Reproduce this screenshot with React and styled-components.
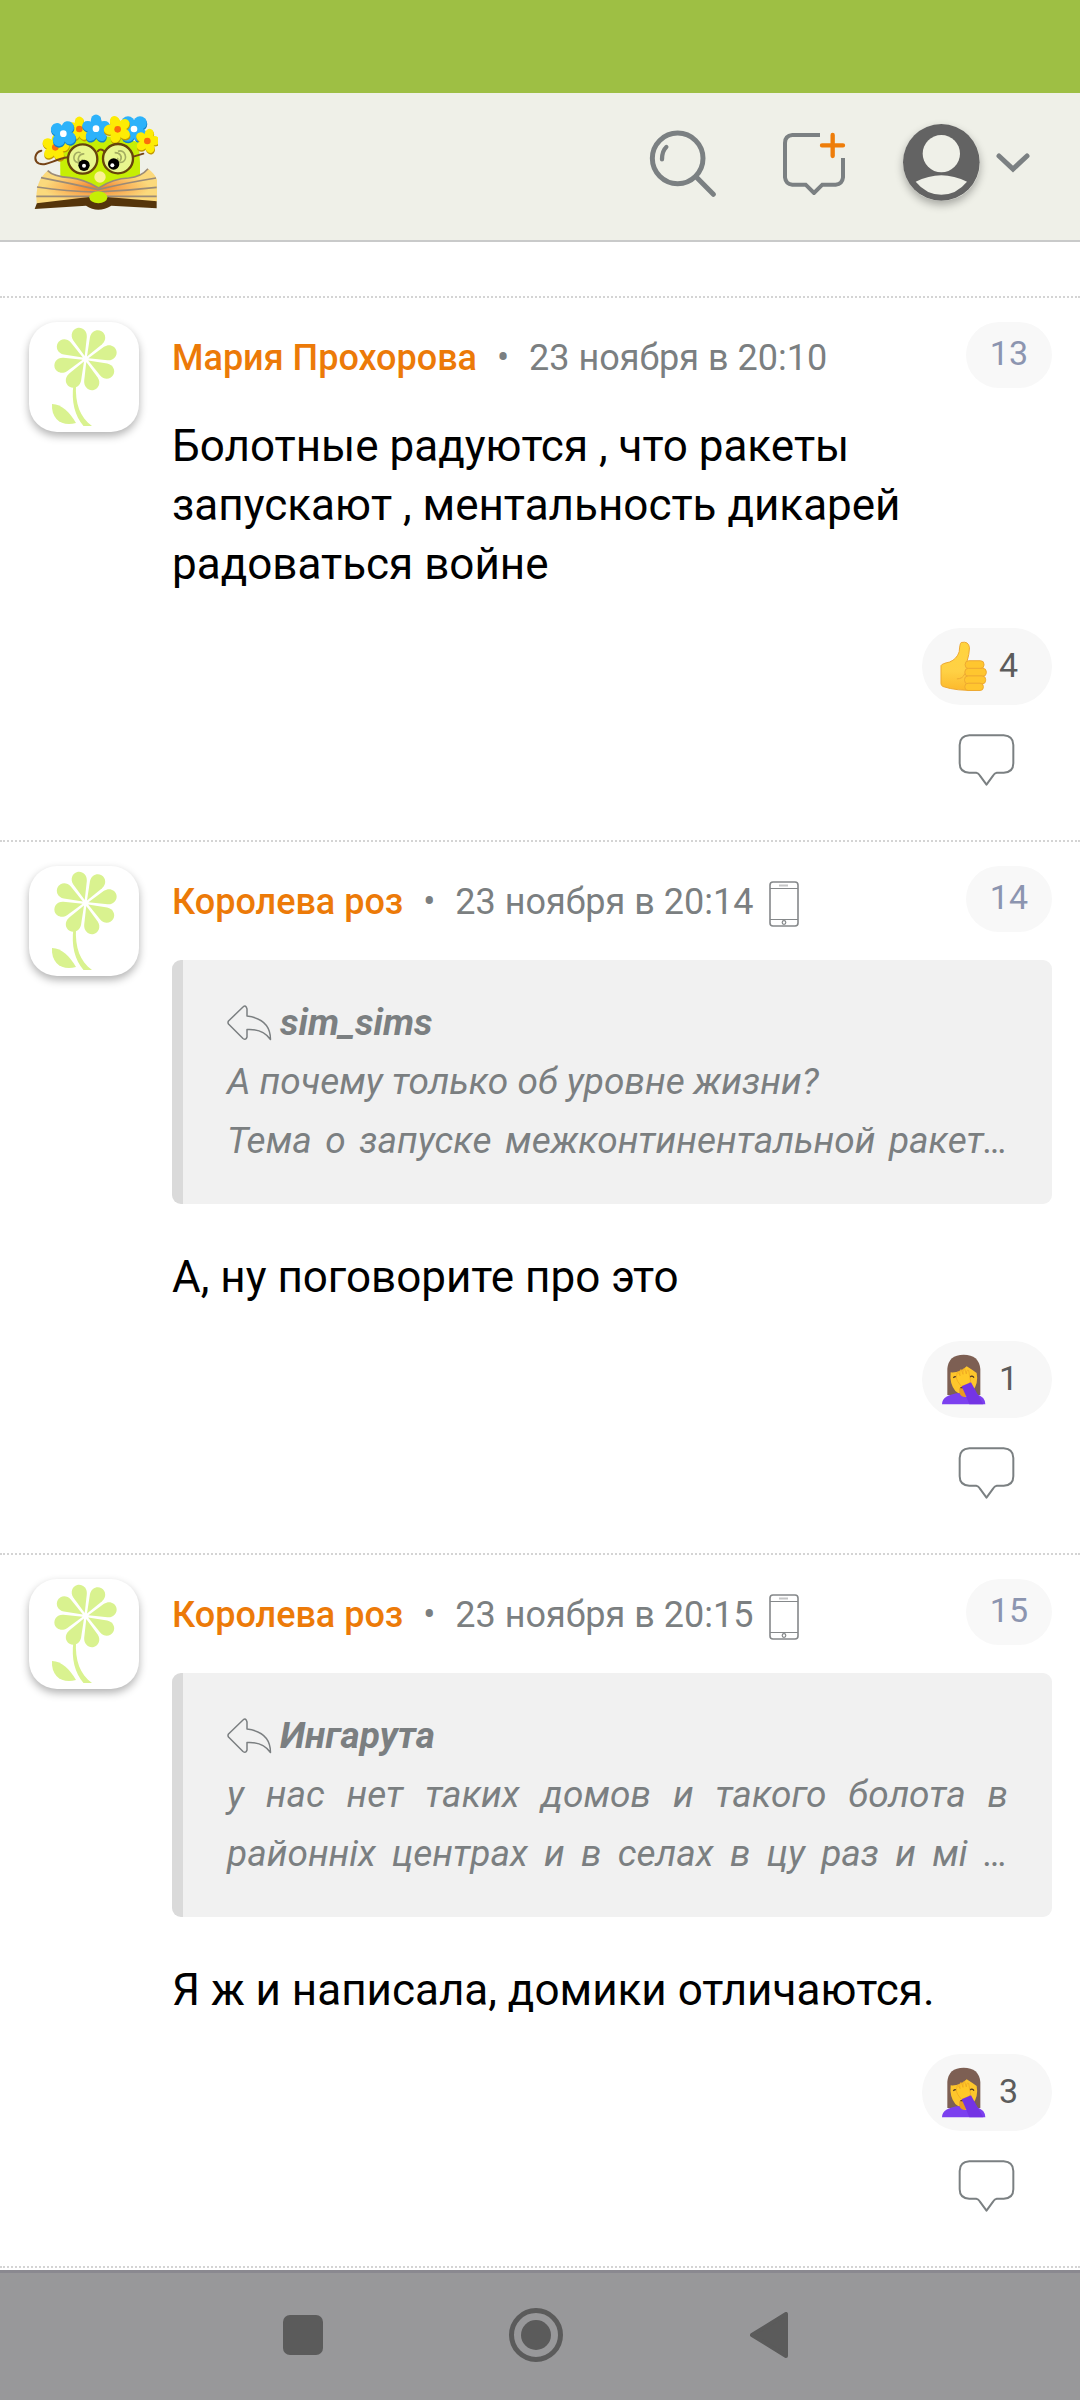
import styled, { createGlobalStyle } from 'styled-components';

const GlobalStyle = createGlobalStyle`
  * {
    box-sizing: border-box;
  }

  body {
    margin: 0;
    background: #ffffff;
    color: #000000;
    font-family: Roboto, 'Noto Sans', sans-serif;
  }

  button {
    border: 0;
    padding: 0;
    background: none;
    font: inherit;
    color: inherit;
    cursor: pointer;
  }

  svg {
    display: block;
  }
`;

const Page = styled.div`
  min-height: 100vh;
  display: flex;
  flex-direction: column;
`;

const StatusBar = styled.div`
  height: 93px;
  background: #9ebf44;
`;

const Header = styled.header`
  display: flex;
  align-items: center;
  justify-content: space-between;
  height: 149px;
  padding: 0 50px 8px 34px;
  background: #eff0e8;
  border-bottom: 2px solid #c9caca;
`;

const HeaderActions = styled.div`
  display: flex;
  align-items: center;
  gap: 65px;
`;

const ProfileButton = styled.button`
  display: flex;
  align-items: center;
  gap: 16px;
  margin-left: -8px;
`;

const ProfilePicture = styled.span`
  border-radius: 50%;
  box-shadow: 0 4px 8px rgba(0, 0, 0, 0.3);
`;

const Feed = styled.main`
  padding-top: 54px;
`;

const Comment = styled.article`
  display: flex;
  gap: 33px;
  padding: 24px 28px 54px 29px;
  border-top: 2px dotted #d4d4d4;
`;

const FeedEnd = styled.hr`
  margin: 0;
  border: 0;
  border-top: 2px dotted #d4d4d4;
`;

const Avatar = styled.a`
  flex: none;
  width: 110px;
  height: 110px;
  border-radius: 28px;
  background: #ffffff;
  box-shadow: 0 4px 8px rgba(0, 0, 0, 0.3);
`;

const Content = styled.div`
  flex: 1;
  min-width: 0;
`;

const Meta = styled.div`
  display: flex;
  margin-bottom: 22px;
  font-size: 36px;
  line-height: 72px;
  color: #7b7f81;
`;

const Author = styled.a`
  color: #ec7a08;
  font-weight: 500;
  text-decoration: none;
`;

const Dot = styled.span`
  width: 52px;
  text-align: center;
`;

const Device = styled.span`
  align-self: center;
  margin-left: 16px;
  padding-top: 4px;
`;

const Number = styled.a`
  height: 66px;
  margin-left: auto;
  padding: 0 24px;
  border-radius: 33px;
  background: #f8f8f8;
  color: #8c95b0;
  font-size: 34px;
  line-height: 62px;
  text-decoration: none;
`;

const Quote = styled.blockquote`
  margin: 0 0 43px;
  padding: 33px 44px 34px;
  border-left: 11px solid #dadada;
  border-radius: 9px;
  background: #f1f1f1;
  color: #7b7f81;
  font-size: 37px;
  font-style: italic;
  line-height: 59px;
`;

const QuoteAuthor = styled.div`
  display: flex;
  align-items: center;
  gap: 8px;
  font-weight: 700;
`;

const QuoteLine = styled.p`
  margin: 0;
  text-align: justify;
  text-align-last: ${(props) => (props.$fill ? 'justify' : 'auto')};
`;

const Text = styled.p`
  margin: 0 0 34px;
  padding-top: 1px;
  font-size: 44px;
  line-height: 59px;
`;

const Actions = styled.div`
  display: flex;
  flex-direction: column;
  align-items: center;
  gap: 29px;
  width: fit-content;
  margin-left: auto;
`;

const Reaction = styled.button`
  display: flex;
  align-items: center;
  gap: 12px;
  height: 77px;
  padding: 0 34px 0 18px;
  border-radius: 39px;
  background: #f7f7f7;
`;

const Count = styled.span`
  padding-bottom: 4px;
  color: #5c5c5c;
  font-size: 34px;
`;

const SystemBar = styled.nav`
  display: grid;
  grid-template-columns: repeat(3, 233px);
  justify-content: center;
  height: 130px;
  margin-top: auto;
  padding-right: 8px;
  background: #98989a;
  box-shadow: inset 0 3px #8a8990;
`;

const SystemButton = styled.button`
  display: grid;
  place-items: center;
`;

const PETALS = [-15, 30, 75, 120, 165, 210, 255, 300];

const BLUE = ['#2cb2fa', '#117fc4', '#ffffff'];
const YELLOW = ['#fdec05', '#c49b00', '#fb6c0c'];

// listed from back to front
const WREATH = [
  { x: 166, y: 200, turn: 10, size: 40, petals: 5, colors: YELLOW },
  { x: 238, y: 145, turn: 0, size: 36, petals: 5, colors: YELLOW },
  { x: 190, y: 159, turn: 35, size: 40, petals: 4, colors: BLUE },
  { x: 288, y: 144, turn: 0, size: 41, petals: 5, colors: BLUE },
  { x: 402, y: 145, turn: 45, size: 44, petals: 4, colors: BLUE },
  { x: 353, y: 146, turn: -20, size: 40, petals: 5, colors: YELLOW },
  { x: 442, y: 181, turn: 15, size: 36, petals: 5, colors: YELLOW },
];

function WreathFlower({ x, y, turn, size, petals, colors }) {
  const steps = Array.from({ length: petals }, (_, i) => turn + (i * 360) / petals);
  const [fill, shade, heart] = colors;
  const rx = size * (petals === 4 ? 0.46 : 0.38);
  return (
    <g transform={`translate(${x} ${y})`}>
      {steps.map((a) => (
        <ellipse key={`s${a}`} cy={-size * 0.6} rx={rx} ry={size * 0.46} fill={shade} transform={`translate(1 4) rotate(${a})`} />
      ))}
      {steps.map((a) => (
        <ellipse key={a} cy={-size * 0.58} rx={rx} ry={size * 0.46} fill={fill} transform={`rotate(${a})`} />
      ))}
      <circle r="10" fill={heart} />
    </g>
  );
}

function Logo() {
  return (
    <svg width="124" height="100" viewBox="102 97 372 300">
      <defs>
        <radialGradient id="pages" cx="0.5" cy="0.55" r="0.55">
          <stop offset="0" stopColor="#f47a22" />
          <stop offset="0.35" stopColor="#f8a850" />
          <stop offset="0.8" stopColor="#fbd97c" />
        </radialGradient>
      </defs>
      <path d="M186 184Q300 150 414 184Q424 240 418 320H184Q176 250 186 184Z" fill="#c6ee04" />
      <path d="M104 385L112 364L260 346H330L470 358V383L334 375Q294 399 258 375Z" fill="#55350b" />
      <path d="M143 270Q160 288 210 291Q252 296 296 322Q340 293 386 292Q424 288 444 264Q464 278 471 297V362L330 350Q296 340 260 350L110 368Q104 300 143 270Z" fill="url(#pages)" />
      <g fill="none" stroke="#9b8b77" strokeWidth="5">
        <path d="M143 270Q160 288 210 291Q252 296 296 322Q340 293 386 292Q424 288 444 264" />
        <path d="M123 291Q210 308 294 327Q370 308 468 292" />
        <path d="M111 319Q200 332 290 334Q380 330 470 320" />
        <path d="M109 347H470" />
      </g>
      <ellipse cx="295" cy="350" rx="27" ry="18" fill="#c6ee04" />
      <circle cx="300" cy="289" r="17" fill="#fbf194" />
      {WREATH.map((flower) => (
        <WreathFlower key={flower.x} {...flower} />
      ))}
      <g fill="none" stroke="#754316" strokeWidth="6" strokeLinecap="round">
        <path d="M124 210C104 214 100 240 116 248C140 258 160 236 204 230" />
        <path d="M293 212Q302 201 313 212" />
        <path d="M400 228L430 219" />
      </g>
      <g fill="#e8f68e" stroke="#66440b" strokeWidth="7">
        <ellipse cx="248" cy="235" rx="44" ry="44" />
        <ellipse cx="354" cy="234" rx="45" ry="44" />
      </g>
      <g fill="none" stroke="#a4ad62" strokeWidth="5">
        <path d="M242 216C222 208 212 242 234 246C246 248 248 240 246 236" />
        <path d="M253 220C236 218 230 238 240 244" />
        <path d="M354 212C376 204 384 236 368 244C356 248 350 238 354 232" />
        <path d="M344 216C362 216 368 230 360 240" />
      </g>
      <circle cx="252" cy="254" r="17" fill="#000" />
      <circle cx="341" cy="250" r="17" fill="#000" />
      <circle cx="252" cy="255" r="6" fill="#fff" />
      <circle cx="337" cy="254" r="6" fill="#fff" />
    </svg>
  );
}

function SearchIcon() {
  return (
    <svg width="68" height="68" viewBox="88 148 204 204" fill="none" stroke="#7b8082" strokeWidth="15" strokeLinecap="round">
      <circle cx="174" cy="236" r="76" />
      <path d="M229 291L281 344" />
      <path d="M127 239Q127 214 140 202" strokeWidth="13" />
    </svg>
  );
}

function NewTopicIcon() {
  return (
    <svg width="64" height="64" viewBox="486 153 192 192" fill="none" strokeWidth="12">
      <path d="M600 165H517Q495 167 495 189V292Q497 312 517 314H557L582 339L607 314H647Q667 312 669 292V234" stroke="#7b8082" />
      <path d="M638 165V228M606 196H669" stroke="#ee7d0a" strokeWidth="13" strokeLinecap="round" />
    </svg>
  );
}

function ProfileIcon() {
  return (
    <svg width="77" height="77" viewBox="0 0 231 231">
      <circle cx="115" cy="115" r="115" fill="#636363" />
      <circle cx="115" cy="89" r="56" fill="#eff0e8" />
      <path d="M38 173Q115 134 192 173Q160 212 115 212Q70 212 38 173Z" fill="#eff0e8" />
    </svg>
  );
}

function ChevronIcon() {
  return (
    <svg width="34" height="20" viewBox="0 0 34 20" fill="none" stroke="#7b8082" strokeWidth="5" strokeLinecap="round">
      <path d="M3 3L17 16L31 3" />
    </svg>
  );
}

function FlowerPicture() {
  return (
    <svg width="110" height="110" viewBox="0 0 110 110" fill="#d9f28f">
      {PETALS.map((angle) => (
        <path key={angle} d="M0 -3L-7 -21C-9 -27 -5 -32 0 -32C5 -32 9 -27 7 -21Z" transform={`translate(56.5 37) rotate(${angle})`} />
      ))}
      <path d="M44.5 62C42 80 46 94 54.5 104H63C51 95 46 82 47 62Z" />
      <path d="M23 82C33 82 41 91 47 101C34 105 22 98 23 82Z" />
    </svg>
  );
}

function PhoneIcon() {
  return (
    <svg width="30" height="46" viewBox="0 0 30 46" fill="none" stroke="#85888a">
      <rect x="1" y="1" width="28" height="44" rx="3" strokeWidth="1.6" />
      <path d="M1 7.500H29M1 38.500H29" strokeWidth="1.200" />
      <path d="M10 4.500H19" strokeWidth="2" stroke="#c4c5c6" />
      <circle cx="15" cy="41.500" r="1.800" strokeWidth="1.200" />
    </svg>
  );
}

function ReplyIcon() {
  return (
    <svg width="45" height="36" viewBox="0 0 45 36" fill="none" stroke="#7b7f81" strokeWidth="1.500" strokeLinejoin="round">
      <path d="M1.500 16Q0.500 17.500 1.500 19L16 33.500Q19 35.500 20 32V24.500Q36 23.500 43.500 34.500Q43.500 14 20 11V4Q19 -0.500 16 2Z" />
    </svg>
  );
}

function BubbleIcon() {
  return (
    <svg width="57" height="52" viewBox="296 401 170 157" fill="none" stroke="#7b8082" strokeWidth="6" strokeLinejoin="round">
      <path d="M329 405H433Q462 407 462 434V489Q462 516 433 518H412Q406 519 402 525L381 554L360 525Q356 519 350 518H329Q300 516 300 489V434Q300 407 329 405Z" />
    </svg>
  );
}

function ThumbIcon() {
  return (
    <svg width="47" height="51" viewBox="239 122 142 153">
      <defs>
        <linearGradient id="hand" x1="0" y1="0" x2="0" y2="1">
          <stop offset="0" stopColor="#ffd43d" />
          <stop offset="0.6" stopColor="#ffd145" />
          <stop offset="1" stopColor="#fcb92c" />
        </linearGradient>
      </defs>
      <g stroke="#eda832" strokeWidth="3">
        <path d="M242 196Q244 190 268 185Q290 176 297 154Q299 128 303 126Q326 121 328 142Q328 160 320 186L350 200L348 270Q290 273 248 259Q242 256 242 250Z" fill="url(#hand)" />
        <g fill="#ffc62f">
          <rect x="315" y="181" width="57" height="24" rx="11" />
          <rect x="314" y="204" width="65" height="24" rx="11" />
          <rect x="313" y="227" width="64" height="24" rx="11" />
          <rect x="314" y="249" width="56" height="22" rx="10" />
        </g>
      </g>
      <path d="M290 236Q308 236 314 220" fill="none" stroke="#eda832" strokeWidth="3" />
    </svg>
  );
}

function FacepalmIcon() {
  return (
    <svg width="47" height="51" viewBox="240 103 141 153">
      <path d="M262 226V148Q265 105 311 105Q357 105 361 148V226Z" fill="#7d5f53" />
      <path d="M272 158Q300 160 320 140Q336 150 350 160Q356 192 338 214Q310 236 286 214Q268 192 272 158Z" fill="#fdc62c" />
      <path d="M298 206H320V230Q309 240 298 230Z" fill="#ea9a20" />
      <path d="M246 254Q246 226 298 220Q304 234 318 232L346 222Q376 230 376 254Z" fill="#7c40ef" />
      <path d="M280 174Q286 168 294 174M330 172Q336 166 342 174" fill="none" stroke="#4c3526" strokeWidth="4" />
      <path d="M291 164Q290 154 296 160L300 168Q298 148 304 150L309 164Q308 144 314 147L319 163Q320 148 326 152L330 176Q336 184 326 192L304 200Q290 184 288 172Z" fill="#ffc928" stroke="#eda321" strokeWidth="2" />
      <path d="M301 204H322" stroke="#6b3c1c" strokeWidth="4" />
      <path d="M305 200L333 188Q348 216 370 254H328Q318 228 305 200Z" fill="#7434e4" />
    </svg>
  );
}

const comments = [
  {
    number: 13,
    author: 'Мария Прохорова',
    date: '23 ноября в 20:10',
    text: 'Болотные радуются , что ракеты запускают , ментальность дикарей радоваться войне',
    reaction: 'thumb',
    count: 4,
  },
  {
    number: 14,
    author: 'Королева роз',
    date: '23 ноября в 20:14',
    mobile: true,
    quote: {
      author: 'sim_sims',
      lines: ['А почему только об уровне жизни?', 'Тема о запуске межконтинентальной ракет…'],
    },
    text: 'А, ну поговорите про это',
    reaction: 'facepalm',
    count: 1,
  },
  {
    number: 15,
    author: 'Королева роз',
    date: '23 ноября в 20:15',
    mobile: true,
    quote: {
      author: 'Ингарута',
      lines: ['у нас нет таких домов и такого болота в районніх центрах и в селах в цу раз и мі …'],
    },
    text: 'Я ж и написала, домики отличаются.',
    reaction: 'facepalm',
    count: 3,
  },
];

function CommentItem({ comment }) {
  const { number, author, date, mobile, quote, text, reaction, count } = comment;

  return (
    <Comment>
      <Avatar href="#profile" aria-label={author}>
        <FlowerPicture />
      </Avatar>
      <Content>
        <Meta>
          <Author href="#profile">{author}</Author>
          <Dot>•</Dot>
          <time>{date}</time>
          {mobile && (
            <Device>
              <PhoneIcon />
            </Device>
          )}
          <Number href={`#comment-${number}`}>{number}</Number>
        </Meta>
        {quote && (
          <Quote>
            <QuoteAuthor>
              <ReplyIcon />
              {quote.author}
            </QuoteAuthor>
            {quote.lines.map((line) => (
              <QuoteLine key={line} $fill={line.endsWith('…')}>
                {line}
              </QuoteLine>
            ))}
          </Quote>
        )}
        <Text>{text}</Text>
        <Actions>
          <Reaction type="button">
            {reaction === 'thumb' ? <ThumbIcon /> : <FacepalmIcon />}
            <Count>{count}</Count>
          </Reaction>
          <button type="button" aria-label="Ответить">
            <BubbleIcon />
          </button>
        </Actions>
      </Content>
    </Comment>
  );
}

function App() {
  return (
    <Page>
      <GlobalStyle />
      <StatusBar />
      <Header>
        <a href="#home" aria-label="Главная">
          <Logo />
        </a>
        <HeaderActions>
          <button type="button" aria-label="Поиск">
            <SearchIcon />
          </button>
          <button type="button" aria-label="Новая тема">
            <NewTopicIcon />
          </button>
          <ProfileButton type="button" aria-label="Профиль">
            <ProfilePicture>
              <ProfileIcon />
            </ProfilePicture>
            <ChevronIcon />
          </ProfileButton>
        </HeaderActions>
      </Header>

      <Feed>
        {comments.map((comment) => (
          <CommentItem key={comment.number} comment={comment} />
        ))}
        <FeedEnd />
      </Feed>

      <SystemBar>
        <SystemButton type="button" aria-label="Недавние">
          <svg width="40" height="40">
            <rect width="40" height="40" rx="7" fill="#5b5b5b" />
          </svg>
        </SystemButton>
        <SystemButton type="button" aria-label="Домой">
          <svg width="54" height="54">
            <circle cx="27" cy="27" r="24.500" fill="none" stroke="#5b5b5b" strokeWidth="5" />
            <circle cx="27" cy="27" r="15" fill="#5b5b5b" />
          </svg>
        </SystemButton>
        <SystemButton type="button" aria-label="Назад">
          <svg width="38" height="46" fill="#5b5b5b" stroke="#5b5b5b" strokeWidth="4" strokeLinejoin="round">
            <path d="M2 23L36 2V44Z" />
          </svg>
        </SystemButton>
      </SystemBar>
    </Page>
  );
}

export default App;
